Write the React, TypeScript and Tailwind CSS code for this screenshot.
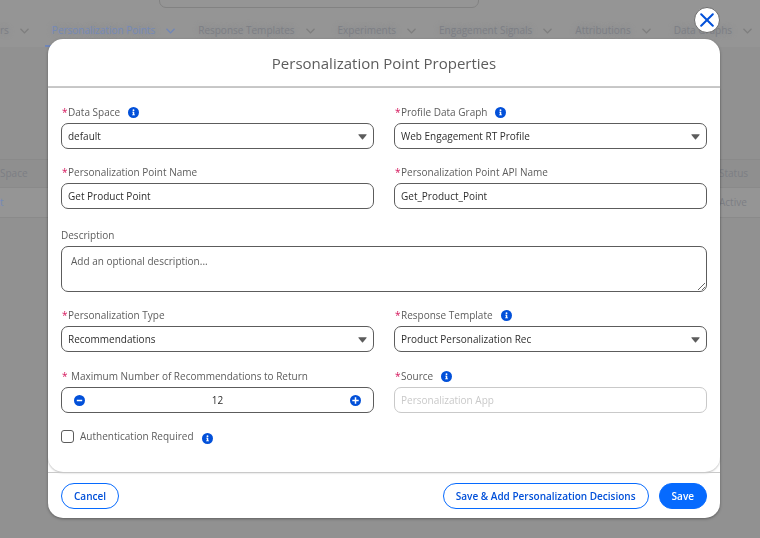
import type { ReactNode } from "react";

const controlBase =
  "block h-[26px] w-full rounded-[7px] border border-[#5c5c5c] bg-white px-[6px] text-[10px] leading-4 text-[#2e2e2e] outline-none";

function InfoIcon() {
  return (
    <svg viewBox="0 0 20 20" className="size-[11px] shrink-0" role="img" aria-label="More information">
      <circle cx="10" cy="10" r="10" fill="#0250d9" />
      <circle cx="10" cy="5.8" r="1.7" fill="#fff" />
      <path d="M7.6 8.6h3.8v5h1.4v1.6H7.4v-1.6h1.4v-3.4H7.6z" fill="#fff" />
    </svg>
  );
}

function Chevron({ className }: { className: string }) {
  return (
    <svg viewBox="0 0 9 6" className={`h-[6px] w-[9px] shrink-0 ${className}`} fill="none" stroke="currentColor" strokeWidth="1.3">
      <path d="M0.5 0.7 4.5 4.9 8.5 0.7" />
    </svg>
  );
}

type FieldProps = {
  id: string;
  label: string;
  required?: boolean;
  info?: boolean;
  spaced?: boolean;
  children: ReactNode;
};

function Field({ id, label, required = true, info, spaced, children }: FieldProps) {
  return (
    <div className="flex min-w-0 flex-col gap-[3px]">
      <div className="flex h-4 items-center gap-2">
        <label htmlFor={id} className="flex text-[10px] leading-4 text-[#5c5c5c]">
          {required && (
            <span className={`${spaced ? "w-[10px]" : "w-[7px]"} pl-px font-normal text-[#d4145a]`}>*</span>
          )}
          {label}
        </label>
        {info && <InfoIcon />}
      </div>
      {children}
    </div>
  );
}

function Select({ id, value }: { id: string; value: string }) {
  return (
    <div className="relative">
      <select id={id} defaultValue={value} className={`${controlBase} appearance-none`}>
        <option>{value}</option>
      </select>
      <svg viewBox="0 0 9 6" className="pointer-events-none absolute top-[11px] right-[7px] h-[6px] w-[9px]">
        <path d="M0.8 0.3h7.4q.8 0 .3.7L5 5.3q-.5.5-1 0L.5 1Q0 .3.8.3z" fill="#5c5c5c" />
      </svg>
    </div>
  );
}

function StepButton({ kind }: { kind: "minus" | "plus" }) {
  return (
    <button type="button" aria-label={kind === "plus" ? "Increase" : "Decrease"} className="shrink-0">
      <svg viewBox="0 0 11 11" className="size-[11px]">
        <circle cx="5.5" cy="5.5" r="5.5" fill="#0250d9" />
        <path d={kind === "plus" ? "M2.3 5.5h6.4M5.5 2.3v6.4" : "M2.8 5.5h5.4"} stroke="#fff" strokeWidth="1.5" />
      </svg>
    </button>
  );
}

const tabs = [
  "rs",
  "Personalization Points",
  "Response Templates",
  "Experiments",
  "Engagement Signals",
  "Attributions",
  "Data Graphs",
];

function BackgroundPage() {
  return (
    <div aria-hidden="true" inert className="min-h-screen overflow-hidden bg-[#919191] text-[10px] text-[#7c7e84]">
      <div className="bg-[#959595]">
        <div className="flex h-2 items-end justify-center overflow-hidden pr-[122px]">
          <input
            type="search"
            placeholder="Search..."
            className="h-[26px] w-80 shrink-0 rounded-[7px] border border-[#828282] bg-transparent pl-8 placeholder:text-[#828282]"
          />
        </div>
        <nav className="flex h-[39px] overflow-hidden pt-2 whitespace-nowrap">
          {tabs.map((tab, i) => (
            <a
              key={tab}
              href="#"
              className={`flex shrink-0 items-center gap-[11px] pr-4 ${
                i === 0 ? "" : "pl-[7px]"
              } ${i === 1 ? "border-b-2 border-[#7086b8] text-[#7489b8]" : "border-b-2 border-transparent"}`}
            >
              <span className="font-medium text-shadow-[0_0_6px_#84878c]">{tab}</span>
              <Chevron className={i === 1 ? "text-[#7086b8]" : "text-[#7e7e7e]"} />
            </a>
          ))}
        </nav>
      </div>
      <table className="mt-28 w-full border-collapse text-left">
        <thead>
          <tr className="h-7 border-y border-[#8a8a8a] bg-[#8f8f8f]">
            <th className="font-normal">Space</th>
            <th className="w-[41px] font-normal">Status</th>
          </tr>
        </thead>
        <tbody>
          <tr className="h-[30px] border-b border-[#8a8a8a] bg-[#959595]">
            <td className="text-[#7489b8]">t</td>
            <td>Active</td>
          </tr>
        </tbody>
      </table>
    </div>
  );
}

export default function App() {
  return (
    <div className="font-['Open_Sans','Noto_Sans',sans-serif]">
      <BackgroundPage />
      <div className="fixed inset-0 overflow-auto pt-[39px] pr-10 pb-5 pl-12">
        <div
          role="dialog"
          aria-modal="true"
          aria-labelledby="dialog-title"
          className="relative rounded-[15px] bg-white shadow-[0_1px_3px_rgba(0,0,0,0.35)]"
        >
          <button
            type="button"
            aria-label="Close"
            className="absolute -top-8 right-0 flex size-[26px] items-center justify-center rounded-full border border-[#6b6b6b] bg-white"
          >
            <svg viewBox="0 0 14 14" className="size-[14px]" stroke="#0250d9" strokeWidth="2" strokeLinecap="round">
              <path d="M1.2 1.2 12.8 12.8M12.8 1.2 1.2 12.8" />
            </svg>
          </button>
          <header className="flex h-[49px] items-center justify-center rounded-t-[15px] border-b-2 border-[#c9c9c9]">
            <h2 id="dialog-title" className="text-[15px] leading-6 text-[#5c5c5c]">
              Personalization Point Properties
            </h2>
          </header>
          <form onSubmit={(e) => e.preventDefault()}>
            <div className="rounded-b-[15px] px-[13px] pt-4 pb-7 shadow-[0_1px_2px_rgba(0,0,0,0.25)]">
              <div className="grid grid-cols-2 gap-x-5 gap-y-[15px]">
                <Field id="data-space" label="Data Space" info>
                  <Select id="data-space" value="default" />
                </Field>
                <Field id="data-graph" label="Profile Data Graph" info>
                  <Select id="data-graph" value="Web Engagement RT Profile" />
                </Field>
                <Field id="point-name" label="Personalization Point Name">
                  <input id="point-name" defaultValue="Get Product Point" className={controlBase} />
                </Field>
                <Field id="api-name" label="Personalization Point API Name">
                  <input id="api-name" defaultValue="Get_Product_Point" className={controlBase} />
                </Field>
                <div className="col-span-2 pt-[3px]">
                  <Field id="description" label="Description" required={false}>
                    <textarea
                      id="description"
                      placeholder="Add an optional description..."
                      className="block h-[46px] w-full resize rounded-[7px] border border-[#5c5c5c] px-[9px] py-[6px] text-[10px] leading-4 outline-none placeholder:text-[#5c5c5c]"
                    />
                  </Field>
                </div>
                <Field id="type" label="Personalization Type">
                  <Select id="type" value="Recommendations" />
                </Field>
                <Field id="template" label="Response Template" info>
                  <Select id="template" value="Product Personalization Rec" />
                </Field>
              </div>
              <div className="grid grid-cols-2 gap-x-5 gap-y-[15px] pt-4">
                <Field id="max" label="Maximum Number of Recommendations to Return" spaced>
                  <div className="flex h-[26px] items-center rounded-[7px] border border-[#5c5c5c] px-3">
                    <StepButton kind="minus" />
                    <input
                      id="max"
                      inputMode="numeric"
                      defaultValue="12"
                      className="w-0 grow text-center text-[10px] leading-4 text-[#2e2e2e] outline-none"
                    />
                    <StepButton kind="plus" />
                  </div>
                </Field>
                <Field id="source" label="Source" info>
                  <input
                    id="source"
                    disabled
                    defaultValue="Personalization App"
                    className="block h-[26px] w-full rounded-[7px] border border-[#c9c9c9] bg-white px-[6px] text-[10px] leading-4 text-[#c9c9c9]"
                  />
                </Field>
                <div className="flex h-4 items-center">
                  <input
                    id="auth"
                    type="checkbox"
                    className="size-[13px] appearance-none rounded-[3px] border border-[#5c5c5c] bg-white checked:bg-[#0250d9]"
                  />
                  <label htmlFor="auth" className="pr-2 pl-[6px] text-[10px] leading-4 text-[#5c5c5c]">
                    Authentication Required
                  </label>
                  <span className="pt-1">
                    <InfoIcon />
                  </span>
                </div>
              </div>
            </div>
            <footer className="flex items-center gap-[10px] rounded-b-[15px] border-t border-[#c9c9c9] px-[13px] pt-[10px] pb-[9px] text-[10px] leading-4 font-semibold">
              <button type="button" className="mr-auto h-[26px] rounded-full border border-[#066afe] px-3 text-[#0250d9]">
                Cancel
              </button>
              <button type="submit" className="h-[26px] rounded-full border border-[#066afe] px-3 text-[#0250d9]">
                Save &amp; Add Personalization Decisions
              </button>
              <button type="submit" className="h-[26px] rounded-full border border-[#066afe] bg-[#066afe] px-3 text-white">
                Save
              </button>
            </footer>
          </form>
        </div>
      </div>
    </div>
  );
}
